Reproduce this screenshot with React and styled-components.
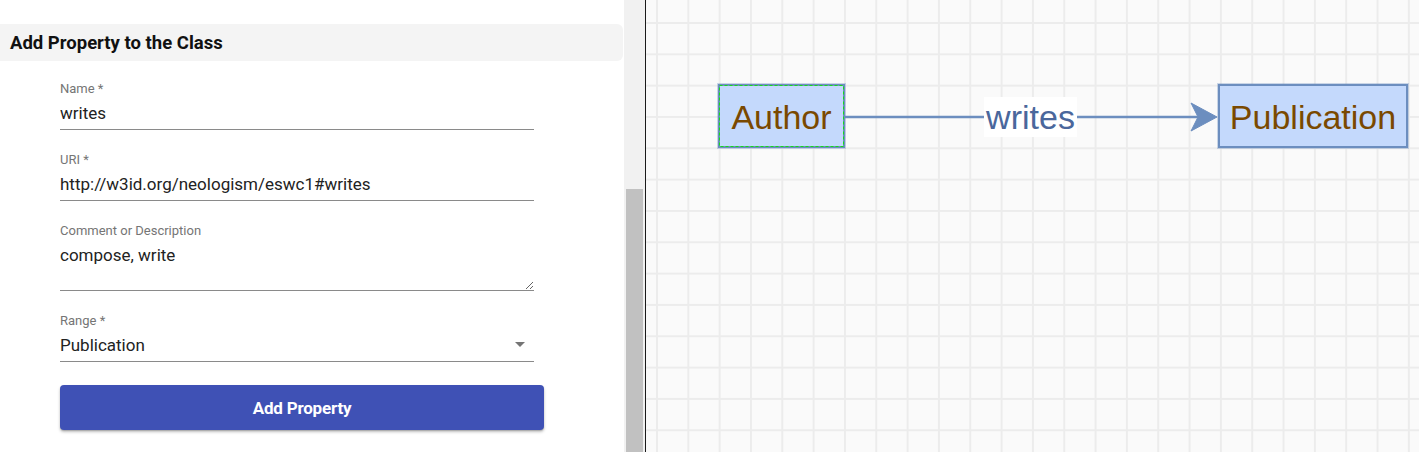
import React from 'react'
import styled, { createGlobalStyle } from 'styled-components'

const GlobalStyle = createGlobalStyle`
    html, body {
        margin: 0;
        padding: 0;
        background: #ffffff;
    }
    body {
        font-family: Roboto, "Liberation Sans", sans-serif;
    }
`

const fields = [
    { label: "Name *", value: "writes" },
    { label: "URI *", value: "http://w3id.org/neologism/eswc1#writes" },
]

function DiagramNode({ left, width, selected, children }) {
    return (
        <Node $left={left} $width={width}>
            {children}
            {selected && (
                <SelectionFrame width={width} height={64}>
                    <rect x="1.5" y="1.5" width={width - 3} height={61} fill="none" stroke="#14e014" strokeWidth="1" strokeDasharray="3 2" />
                </SelectionFrame>
            )}
        </Node>
    )
}

export default function App() {
    return (
        <>
            <GlobalStyle />
            <Page>
                <SidePanel>
                    <Header>Add Property to the Class</Header>
                    <Form>
                        {fields.map(f => (
                            <Field key={f.label}>
                                <Label>{f.label}</Label>
                                <Underline>
                                    <Input type="text" value={f.value} readOnly />
                                </Underline>
                            </Field>
                        ))}
                        <Field>
                            <Label>Comment or Description</Label>
                            <Underline>
                                <TextArea value="compose, write" readOnly />
                            </Underline>
                        </Field>
                        <Field>
                            <Label>Range *</Label>
                            <Underline>
                                <SelectValue>
                                    Publication
                                    <svg width="24" height="24" viewBox="0 0 24 24">
                                        <path d="M7 10l5 5 5-5z" fill="#757575" />
                                    </svg>
                                </SelectValue>
                            </Underline>
                        </Field>
                        <Button type="button">Add Property</Button>
                    </Form>
                </SidePanel>
                <ScrollTrack>
                    <ScrollThumb />
                </ScrollTrack>
                <Divider />
                <Canvas>
                    <svg width="773" height="452" style={{ position: 'absolute', left: 0, top: 0 }}>
                        <line x1="199" y1="117" x2="556" y2="117" stroke="#6c8ebf" strokeWidth="2.5" />
                        <polygon points="571,117 545,103 552,117 545,131" fill="#6c8ebf" stroke="#6c8ebf" strokeWidth="1" strokeLinejoin="miter" />
                    </svg>
                    <DiagramNode left={72} width={127} selected>Author</DiagramNode>
                    <EdgeLabel>writes</EdgeLabel>
                    <DiagramNode left={572} width={190}>Publication</DiagramNode>
                </Canvas>
            </Page>
        </>
    )
}

const Page = styled.div`
    display: flex;
    width: 1419px;
    height: 452px;
    overflow: hidden;
`
const SidePanel = styled.div`
    width: 624px;
    flex-shrink: 0;
    padding-top: 24px;
    box-sizing: border-box;
    background: #ffffff;
`
const Header = styled.div`
    width: 623px;
    height: 37px;
    box-sizing: border-box;
    padding-left: 10px;
    display: flex;
    align-items: center;
    background: #f4f4f4;
    border-radius: 0 6px 6px 0;
    font-size: 18.5px;
    font-weight: 700;
    color: #111;
`
const Form = styled.div`
    display: flex;
    flex-direction: column;
    gap: 22px;
    padding: 20px 0 0 60px;
`
const Field = styled.div`
    width: 474px;
    display: flex;
    flex-direction: column;
`
const Label = styled.label`
    font-size: 13px;
    line-height: 16px;
    color: #757575;
`
const Underline = styled.div`
    border-bottom: 1px solid #8a8a8a;
`
const Input = styled.input`
    display: block;
    width: 100%;
    box-sizing: border-box;
    border: none;
    outline: none;
    background: transparent;
    padding: 4px 0;
    font-family: Roboto, sans-serif;
    font-size: 17px;
    line-height: 24px;
    height: 32px;
    color: #222;
`
const TextArea = styled.textarea`
    display: block;
    width: 100%;
    height: 51px;
    box-sizing: border-box;
    border: none;
    outline: none;
    background: transparent;
    padding: 4px 0 0;
    margin: 0;
    font-family: Roboto, sans-serif;
    font-size: 17px;
    line-height: 24px;
    color: #222;
`
const SelectValue = styled.div`
    display: flex;
    align-items: center;
    justify-content: space-between;
    height: 32px;
    padding-right: 2px;
    font-size: 17px;
    color: #222;
    svg {
        margin-top: -2px;
    }
`
const Button = styled.button`
    width: 484px;
    height: 45px;
    margin-top: 1px;
    border: none;
    border-radius: 4px;
    background: #3f51b5;
    color: #ffffff;
    font-family: Roboto, sans-serif;
    font-size: 17px;
    font-weight: 700;
    letter-spacing: -0.2px;
    box-shadow: 0 2px 3px rgba(0, 0, 0, 0.25), 0 1px 1px rgba(0, 0, 0, 0.14);
    cursor: pointer;
`
const ScrollTrack = styled.div`
    width: 21px;
    flex-shrink: 0;
    background: #f1f1f1;
    padding-top: 189px;
    box-sizing: border-box;
`
const ScrollThumb = styled.div`
    margin-left: 2px;
    width: 17px;
    height: 100%;
    background: #c1c1c1;
`
const Divider = styled.div`
    width: 1px;
    flex-shrink: 0;
    background: #1a1a1a;
`
const Canvas = styled.div`
    position: relative;
    flex: 1;
    background-color: #fafafa;
    background-image:
        linear-gradient(to right, #ececec 0, #ececec 2px, transparent 2px),
        linear-gradient(to bottom, #ececec 0, #ececec 2px, transparent 2px);
    background-size: 31.33px 31.33px;
    background-position: 10px 22px;
`
const Node = styled.div`
    position: absolute;
    top: 84px;
    left: ${({ $left }) => $left}px;
    width: ${({ $width }) => $width}px;
    height: 64px;
    box-sizing: border-box;
    padding-top: 2px;
    border: 2px solid #6c8ebf;
    outline: 1px solid rgba(108, 142, 191, 0.35);
    background: #c4d9fc;
    display: flex;
    align-items: center;
    justify-content: center;
    font-family: "Liberation Sans", Arial, sans-serif;
    font-size: 34px;
    color: #7a4900;
`
const SelectionFrame = styled.svg`
    position: absolute;
    top: -2px;
    left: -2px;
    pointer-events: none;
`
const EdgeLabel = styled.div`
    position: absolute;
    left: 338px;
    top: 97px;
    width: 93px;
    height: 40px;
    background: #ffffff;
    display: flex;
    align-items: center;
    justify-content: center;
    font-family: "Liberation Sans", Arial, sans-serif;
    font-size: 34px;
    color: #4a679c;
`
